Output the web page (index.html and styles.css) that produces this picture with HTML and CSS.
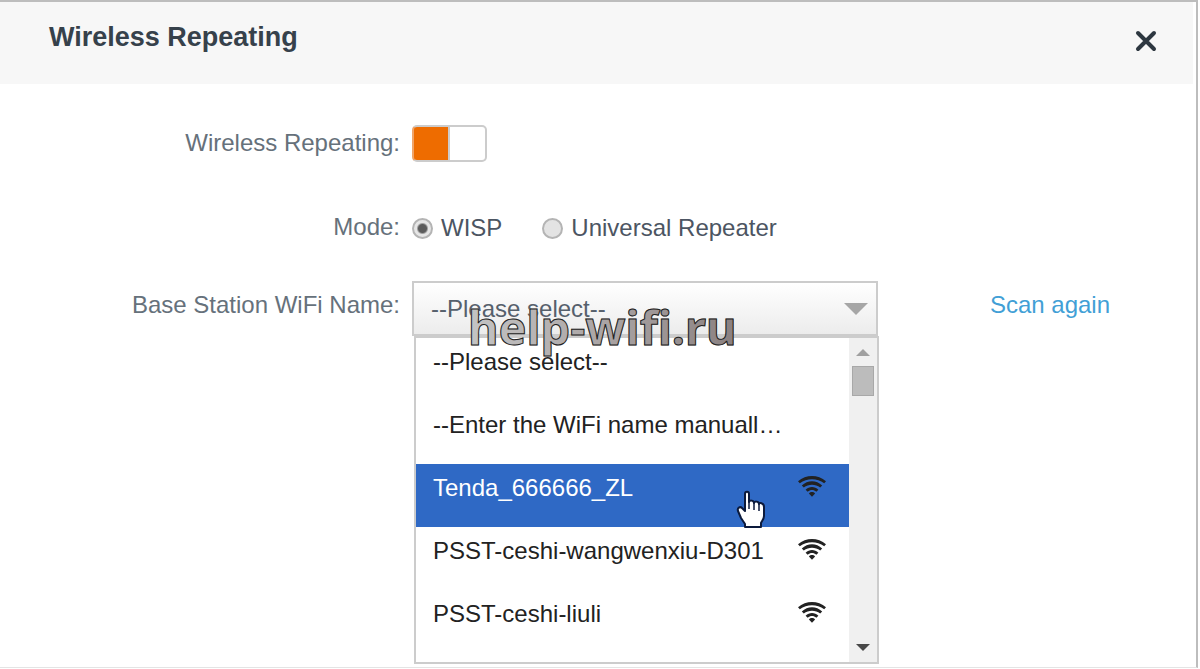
FILE: index.html
```
<!DOCTYPE html>
<html lang="en">
<head>
    <meta charset="UTF-8">
    <meta name="viewport" content="width=device-width, initial-scale=1.0">
    <title>Wireless Repeating</title>
    <link rel="stylesheet" href="styles.css">
</head>
<body>
    <svg class="sprite" aria-hidden="true">
        <symbol id="wifi" viewBox="0 0 28 22">
            <path fill="currentColor" d="M0 6.200C8 -0.800 20 -0.800 28 6.200L26.200 8.200C19 2.800 9 2.800 1.800 8.200z"/>
            <path fill="currentColor" d="M3.800 10.600C9.600 4.900 18.400 4.900 24.200 10.600L22.200 12.500C17.400 8.700 10.600 8.700 5.800 12.500z"/>
            <path fill="currentColor" d="M7.600 14.800C11.200 11 16.800 11 20.400 14.800L18.300 16.700C15.700 14.500 12.300 14.500 9.700 16.700z"/>
            <path fill="currentColor" d="M10.900 18.400C12.600 16.600 15.400 16.600 17.100 18.400L14 21.800z"/>
        </symbol>
    </svg>
    <main class="dialog">
        <header class="dialog-header">
            <h1 class="dialog-title">Wireless Repeating</h1>
            <button class="close" type="button" aria-label="Close">
                <svg viewBox="0 0 22 22" width="22" height="22"><path d="M3 3L19 19M19 3L3 19" stroke="#2d3740" stroke-width="4" stroke-linecap="round"/></svg>
            </button>
        </header>
        <form class="form">
            <div class="row row-switch">
                <label class="label" for="repeating">Wireless Repeating:</label>
                <input class="switch" type="checkbox" id="repeating" checked>
            </div>
            <div class="row row-mode" role="radiogroup" aria-labelledby="mode">
                <span class="label" id="mode">Mode:</span>
                <div class="radios">
                    <label class="radio"><input type="radio" name="mode" checked>WISP</label>
                    <label class="radio"><input type="radio" name="mode">Universal Repeater</label>
                </div>
            </div>
            <div class="row row-station">
                <label class="label" for="station">Base Station WiFi Name:</label>
                <div class="dropdown">
                    <select class="select" id="station">
                        <option>--Please select--</option>
                    </select>
                    <div class="menu">
                        <ul class="options" role="listbox" aria-label="WiFi names">
                            <li role="option">--Please select--</li>
                            <li role="option">--Enter the WiFi name manuall…</li>
                            <li role="option" class="active" aria-selected="true">Tenda_666666_ZL <svg class="wifi"><use href="#wifi"/></svg></li>
                            <li role="option">PSST-ceshi-wangwenxiu-D301 <svg class="wifi"><use href="#wifi"/></svg></li>
                            <li role="option">PSST-ceshi-liuli <svg class="wifi"><use href="#wifi"/></svg></li>
                        </ul>
                        <div class="scrollbar">
                            <span class="arrow arrow-up"></span>
                            <span class="thumb"></span>
                            <span class="arrow arrow-down"></span>
                        </div>
                        <svg class="cursor" viewBox="0 0 30 38" width="30" height="38">
                            <path fill="#fff" stroke="#0c1a3c" stroke-width="2" stroke-linejoin="round" d="M9 21V4C9 1 13 1 13 4V12C13 10 18 10 18 13C18 11 23 11 23 14C23 12 28 13 28 17V26C28 29 26 31 25 33V37H9V34L5 28L2 21C1 18 4 16 6 18Z"/>
                            <path fill="none" stroke="#0c1a3c" stroke-width="1.500" d="M13 12V19M18 13V20M23 14V21"/>
                        </svg>
                    </div>
                    <div class="watermark">help-wifi.ru</div>
                </div>
                <a class="scan" href="#">Scan again</a>
            </div>
        </form>
    </main>
</body>
</html>
```

FILE: styles.css
```
* {
    box-sizing: border-box;
}
body {
    margin: 0;
    background: #fff;
    font: 24px/32px "Liberation Sans", Arial, sans-serif;
    color: #66717b;
}
.sprite {
    display: none;
}
.dialog {
    min-height: calc(100vh - 1px);
    margin-right: 2px;
    padding-right: 3px;
    border-top: 2px solid #bdbdbd;
    border-right: 2px solid #bdbdbd;
    border-bottom: 1px solid #e4e4e4;
}
.dialog-header {
    display: flex;
    justify-content: space-between;
    align-items: flex-start;
    height: 82px;
    padding: 18px 36px 0 49px;
    background: #f7f7f7;
}
.dialog-title {
    margin: 0;
    font-size: 27px;
    line-height: 34px;
    color: #36414b;
}
.close {
    display: flex;
    padding: 10px 0;
    border: 0;
    background: none;
    cursor: pointer;
}
.form {
    padding: 41px 83px 0 0;
}
.row {
    display: grid;
    grid-template-columns: 400px 1fr;
    column-gap: 12px;
}
.label {
    text-align: right;
}
.row-switch {
    line-height: 36px;
}
.switch {
    appearance: none;
    width: 75px;
    height: 37px;
    margin: 0;
    border: 2px solid #ccc;
    border-left-color: #f0a468;
    border-radius: 5px;
    background: linear-gradient(to right, #ee6c00 34px, #ccc 34px, #ccc 36px, #fff 36px);
}
.row-mode {
    margin-top: 48px;
    line-height: 34px;
}
.radios {
    display: flex;
    gap: 40px;
    padding-top: 1px;
    color: #4c5562;
}
.radio {
    display: flex;
    align-items: center;
    gap: 8px;
}
.radio input {
    appearance: none;
    width: 21px;
    height: 21px;
    margin: 0;
    border: 2px solid #b4b4b4;
    border-radius: 50%;
    background: #e3e3e3;
}
.radio input:checked {
    background: radial-gradient(circle, #5c5c5c 4px, #e6e6e6 6px);
}
.row-station {
    grid-template-columns: 400px 466px 1fr;
    margin-top: 36px;
    line-height: 48px;
}
.dropdown {
    position: relative;
}
.select {
    appearance: none;
    display: block;
    width: 100%;
    height: 55px;
    padding: 0 17px;
    border: 2px solid #ccc;
    border-radius: 0;
    background: linear-gradient(#fff, #ececec);
    font: inherit;
    color: #56606c;
}
.dropdown::after {
    content: "";
    position: absolute;
    top: 22px;
    right: 10px;
    border: 12px solid transparent;
    border-top-color: #a6a6a6;
    border-bottom: 0;
}
.menu {
    position: absolute;
    top: 55px;
    left: 2px;
    display: flex;
    width: 465px;
    height: 328px;
    border: 2px solid #ccc;
    background: #fff;
}
.options {
    flex: 1;
    margin: 0;
    padding: 0;
    list-style: none;
    color: #222;
}
.options li {
    display: flex;
    justify-content: space-between;
    height: 63px;
    padding: 0 23px 0 17px;
}
.options .active {
    background: #2f69c5;
    color: #fff;
}
.wifi {
    width: 28px;
    height: 22px;
    margin-top: 11px;
    color: #222;
}
.scrollbar {
    display: flex;
    flex-direction: column;
    align-items: center;
    width: 28px;
    padding: 11px 0;
    background: #f0f0f0;
}
.arrow {
    border: 7px solid transparent;
}
.arrow-up {
    border-top: 0;
    border-bottom-color: #a0a0a0;
}
.arrow-down {
    margin-top: auto;
    border-bottom: 0;
    border-top-color: #484848;
}
.thumb {
    width: 22px;
    height: 30px;
    margin-top: 10px;
    border: 1px solid #a8a8a8;
    background: #bcbcbc;
}
.cursor {
    position: absolute;
    top: 152px;
    left: 320px;
}
/* grey letters in front of a thin dark outline */
.watermark {
    position: absolute;
    top: 16px;
    left: 56px;
    font: bold 47px/60px "Noto Sans", sans-serif;
    background: linear-gradient(to right, #c4c4c4, #aba5a5 50%, #8a8080);
    background-clip: text;
    color: transparent;
    -webkit-text-stroke: 1px #222;
    white-space: nowrap;
    pointer-events: none;
}
.scan {
    justify-self: end;
    color: #429fd6;
    text-decoration: none;
}
```
